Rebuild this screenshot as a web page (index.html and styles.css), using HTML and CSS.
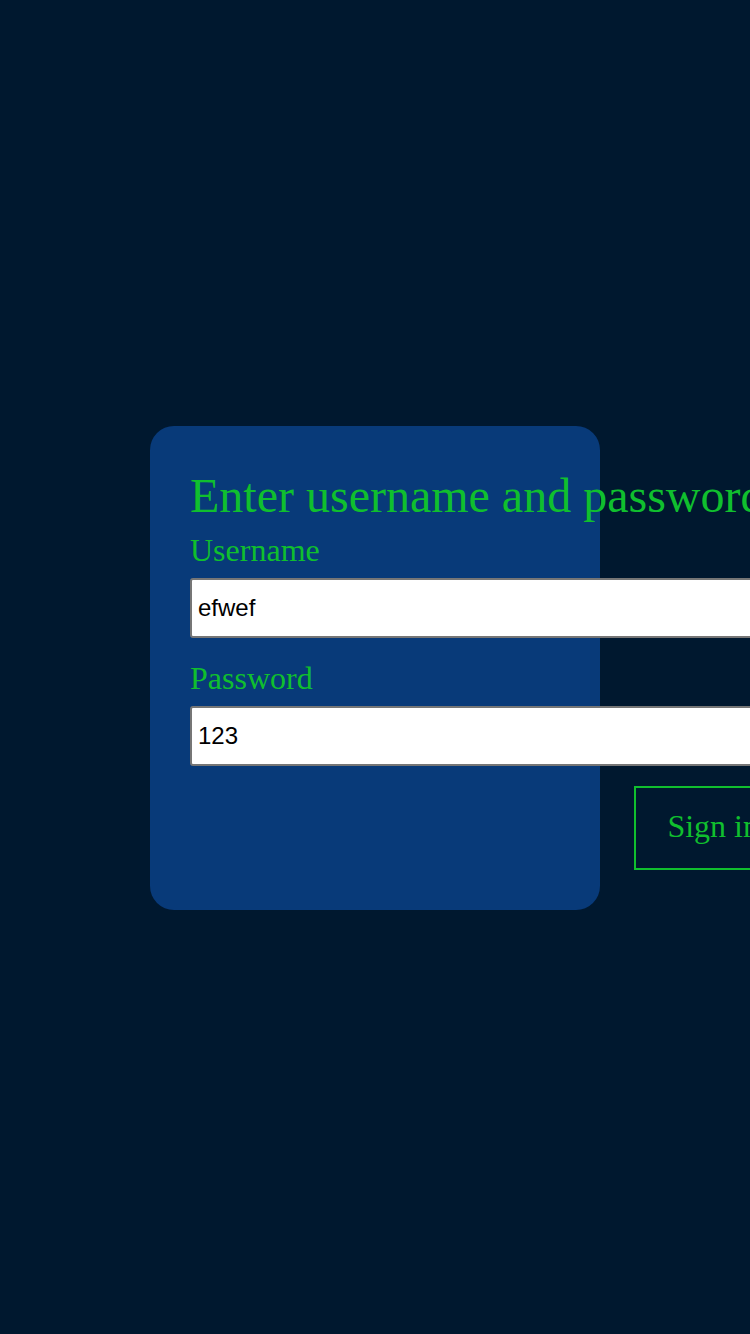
FILE: index.html
```html
<!DOCTYPE html>
<html lang="en">
<head>
<meta charset="utf-8">
<title>Sign in</title>
<link rel="stylesheet" href="styles.css">
</head>
<body>
<main class="page">
  <form class="card">
    <div class="form-body">
      <h1 class="title">Enter username and password</h1>
      <label class="label" for="username">Username</label>
      <input class="field" id="username" type="text" value="efwef">
      <label class="label label-gap" for="password">Password</label>
      <input class="field" id="password" type="text" value="123">
      <button class="submit" type="button">Sign in</button>
    </div>
  </form>
</main>
</body>
</html>
```
FILE: styles.css
```css
html, body {
  margin: 0;
  padding: 0;
  background: #00182f;
  overflow: hidden;
}

.page {
  min-height: 100vh;
  padding-top: 1px;
  display: flex;
  align-items: center;
  justify-content: center;
}

.card {
  box-sizing: border-box;
  width: 450px;
  padding: 40px;
  background: #083a79;
  border-radius: 24px;
  font-family: "Liberation Serif", "Times New Roman", serif;
  color: #10bf2e;
}

.form-body {
  width: 604px;
  display: flex;
  flex-direction: column;
  align-items: flex-start;
}

.title {
  margin: 2px 0 9px;
  font-size: 48px;
  font-weight: normal;
  white-space: nowrap;
  line-height: normal;
}

.label {
  display: block;
  font-size: 32px;
  line-height: normal;
  margin-bottom: 9px;
}

.label-gap {
  margin-top: 22px;
}

.field {
  box-sizing: border-box;
  flex: none;
  width: 100%;
  height: 60px;
  margin: 0;
  padding: 0 6px;
  border: 2px solid #767676;
  border-radius: 3px;
  background: #fff;
  color: #000;
  font-family: "Liberation Sans", Arial, sans-serif;
  font-size: 24px;
}

.submit {
  box-sizing: border-box;
  align-self: flex-end;
  flex: none;
  margin-top: 20px;
  height: 84px;
  padding: 0 33px 4px 31px;
  border: 2px solid #10bf2e;
  background: transparent;
  color: #10bf2e;
  font-family: "Liberation Serif", "Times New Roman", serif;
  font-size: 32px;
  white-space: nowrap;
}
```
